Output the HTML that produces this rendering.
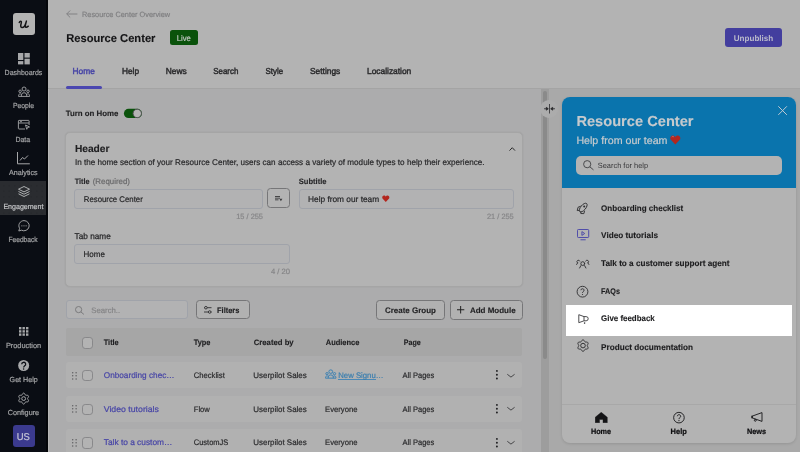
<!DOCTYPE html>
<html><head><meta charset="utf-8">
<style>
*{box-sizing:border-box;margin:0;padding:0}
html,body{width:800px;height:452px;overflow:hidden;background:#acacad;font-family:"Liberation Sans",sans-serif}
.r{position:absolute}
svg.r{overflow:visible;will-change:transform}
#tx{position:absolute;left:0;top:0;will-change:transform}
#tx text{font-family:"Liberation Sans",sans-serif;text-rendering:geometricPrecision}
</style></head><body>
<div class="r" style="left:0px;top:0px;width:48.00px;height:452.00px;background:#0a0d14;"></div>
<div class="r" style="left:48px;top:0px;width:1.00px;height:452.00px;background:#b8b8b8;"></div>
<div class="r" style="left:48px;top:0px;width:752.00px;height:88.00px;background:#b3b3b3;"></div>
<div class="r" style="left:48px;top:88px;width:752.00px;height:1.00px;background:#a4a4a4;"></div>
<div class="r" style="left:541px;top:89px;width:8.00px;height:363.00px;background:#9d9d9d;"></div>
<div class="r" style="left:543px;top:91px;width:4.00px;height:268.00px;background:#8a8a8a;border-radius:2px"></div>
<div class="r" style="left:549px;top:89px;width:251.00px;height:363.00px;background:#a9a9a9;"></div>
<div class="r" style="left:12.5px;top:13px;width:22.50px;height:22.20px;background:#b3b3b3;border-radius:3px"></div>
<div class="r" style="left:0px;top:181px;width:46.00px;height:33.50px;background:#2a2c30;background-image:radial-gradient(circle,#1c1e22 0.45px,transparent 0.7px);background-size:5.5px 5.5px;background-position:1px 2px"></div>
<div class="r" style="left:46px;top:0px;width:2.00px;height:452.00px;background:#04060a;"></div>
<svg class="r" style="left:17.5px;top:52.7px" width="12" height="11.5" viewBox="0 0 12 11.5"><rect x="0" y="0" width="5.3" height="7" fill="#a6a7a9"/><rect x="6.5" y="0" width="5.3" height="4.6" fill="#a6a7a9"/><rect x="0" y="8.1" width="5.3" height="3.3" fill="#a6a7a9"/><rect x="6.5" y="5.7" width="5.3" height="5.7" fill="#a6a7a9"/></svg>
<svg class="r" style="left:17.5px;top:86px" width="12" height="11" viewBox="0 0 12 11"><g fill="none" stroke="#a6a7a9" stroke-width="0.9"><circle cx="6.06" cy="3" r="2"/><circle cx="2.1" cy="5.3" r="1.25"/><circle cx="10" cy="5.3" r="1.25"/><path d="M0.5 10.4 H11.6"/><path d="M3.4 10.4 V9.1 a2.66 2.4 0 0 1 5.32 0 V10.4"/><path d="M0.6 10.4 V9.4 a1.5 1.5 0 0 1 2.7 -0.9"/><path d="M11.5 10.4 V9.4 a1.5 1.5 0 0 0 -2.7 -0.9"/></g></svg>
<svg class="r" style="left:17.5px;top:120.4px" width="12" height="9.5" viewBox="0 0 12 9.5"><g fill="none" stroke="#a6a7a9" stroke-width="0.9"><path d="M7 9 H1 a0.6 0.6 0 0 1 -0.6 -0.6 V1 a0.6 0.6 0 0 1 0.6 -0.6 H10.5 a0.6 0.6 0 0 1 0.6 0.6 V5"/><path d="M0.5 3 H11"/><path d="M2 1.7 H4"/><path d="M7.5 5 L11.5 7 L9.5 7.5 L8.8 9.3 Z"/></g></svg>
<svg class="r" style="left:17px;top:152.2px" width="13" height="12.5" viewBox="0 0 13 12.5"><g fill="none" stroke="#a6a7a9" stroke-width="1"><path d="M0.5 0 V11.8 H12.8"/><path d="M3 8.5 L5.5 5.5 L7.5 7 L11 3.5"/></g></svg>
<svg class="r" style="left:17.6px;top:186.3px" width="12" height="11" viewBox="0 0 12 11"><g fill="none" stroke="#bdbec0" stroke-width="0.9" stroke-linejoin="round"><path d="M6 0.5 L11.5 3.2 L6 5.9 L0.5 3.2 Z"/><path d="M0.5 5.5 L6 8.2 L11.5 5.5"/><path d="M0.5 7.8 L6 10.5 L11.5 7.8"/></g></svg>
<svg class="r" style="left:17.5px;top:219.5px" width="12" height="11.7" viewBox="0 0 12 11.7"><g fill="none" stroke="#a6a7a9" stroke-width="0.95"><path d="M6 0.6 a5.3 5.1 0 1 1 -2.6 9.6 L0.8 11 L1.6 8.3 A5.3 5.1 0 0 1 6 0.6 Z"/></g><g fill="#a6a7a9"><circle cx="3.9" cy="5.8" r="0.6"/><circle cx="6" cy="5.8" r="0.6"/><circle cx="8.1" cy="5.8" r="0.6"/></g></svg>
<svg class="r" style="left:18.9px;top:326.7px" width="9.5" height="9" viewBox="0 0 9.5 9"><rect x="0.0" y="0.0" width="2.4" height="2.4" fill="#a6a7a9"/><rect x="0.0" y="3.2" width="2.4" height="2.4" fill="#a6a7a9"/><rect x="0.0" y="6.4" width="2.4" height="2.4" fill="#a6a7a9"/><rect x="3.5" y="0.0" width="2.4" height="2.4" fill="#a6a7a9"/><rect x="3.5" y="3.2" width="2.4" height="2.4" fill="#a6a7a9"/><rect x="3.5" y="6.4" width="2.4" height="2.4" fill="#a6a7a9"/><rect x="7.0" y="0.0" width="2.4" height="2.4" fill="#a6a7a9"/><rect x="7.0" y="3.2" width="2.4" height="2.4" fill="#a6a7a9"/><rect x="7.0" y="6.4" width="2.4" height="2.4" fill="#a6a7a9"/></svg>
<svg class="r" style="left:17.8px;top:359.5px" width="11.3" height="11" viewBox="0 0 11.3 11"><circle cx="5.65" cy="5.5" r="5.5" fill="#a8a9ab"/><path d="M3.7 4.2 A2 1.9 0 1 1 6.5 5.9 C5.9 6.3 5.65 6.6 5.65 7.4" fill="none" stroke="#0a0d14" stroke-width="1.25"/><circle cx="5.65" cy="8.9" r="0.75" fill="#0a0d14"/></svg>
<svg class="r" style="left:17.8px;top:392.5px" width="11.3" height="11.2" viewBox="0 0 11.3 11.2"><g fill="none" stroke="#a6a7a9" stroke-width="1" stroke-linejoin="round"><path d="M5.65 0.10 L6.12 0.23 L6.54 0.58 L6.87 1.06 L7.12 1.56 L7.34 1.97 L7.60 2.22 L7.95 2.32 L8.41 2.31 L8.97 2.28 L9.56 2.32 L10.07 2.51 L10.41 2.85 L10.54 3.32 L10.44 3.86 L10.19 4.38 L9.88 4.85 L9.64 5.25 L9.55 5.60 L9.64 5.95 L9.88 6.35 L10.19 6.82 L10.44 7.34 L10.54 7.88 L10.41 8.35 L10.07 8.69 L9.56 8.88 L8.97 8.92 L8.41 8.89 L7.95 8.88 L7.60 8.98 L7.34 9.23 L7.12 9.64 L6.87 10.14 L6.54 10.62 L6.12 10.97 L5.65 11.10 L5.18 10.97 L4.76 10.62 L4.43 10.14 L4.18 9.64 L3.96 9.23 L3.70 8.98 L3.35 8.88 L2.89 8.89 L2.33 8.92 L1.74 8.88 L1.23 8.69 L0.89 8.35 L0.76 7.88 L0.86 7.34 L1.11 6.82 L1.42 6.35 L1.66 5.95 L1.75 5.60 L1.66 5.25 L1.42 4.85 L1.11 4.38 L0.86 3.86 L0.76 3.32 L0.89 2.85 L1.23 2.51 L1.74 2.32 L2.33 2.28 L2.89 2.31 L3.35 2.32 L3.70 2.22 L3.96 1.97 L4.18 1.56 L4.43 1.06 L4.76 0.58 L5.18 0.23 L5.65 0.10 Z"/><circle cx="5.65" cy="5.6" r="1.9"/></g></svg>
<div class="r" style="left:12.7px;top:425.4px;width:22.10px;height:21.60px;background:#3b3a8e;border-radius:3px"></div>
<svg class="r" style="left:17px;top:18px" width="14" height="12" viewBox="0 0 14 12"><path d="M2.3 4.5 C2.8 3.4 3.8 3.0 4.3 3.5 C4.7 3.9 4.2 5.2 3.9 6.5 C3.5 8.2 3.8 9.6 5.2 9.6 C6.6 9.6 8.2 7.5 9.0 4.5 M9.4 3.1 C8.7 5.5 8.2 7.5 8.3 8.6 C8.4 9.6 9.5 9.7 11.3 8.2" fill="none" stroke="#141416" stroke-width="1.5" stroke-linecap="round" stroke-linejoin="round"/></svg>
<svg class="r" style="left:65.6px;top:10px" width="11.4" height="8" viewBox="0 0 11.4 8"><g fill="none" stroke="#808082" stroke-width="0.95"><path d="M11.4 4 H0.7"/><path d="M4.2 0.5 L0.7 4 L4.2 7.5"/></g></svg>
<div class="r" style="left:170px;top:30px;width:28.20px;height:14.60px;background:#0a520b;border-radius:2.5px"></div>
<div class="r" style="left:724.8px;top:28px;width:57.20px;height:19.00px;background:#433e9e;border-radius:3px"></div>
<div class="r" style="left:65.5px;top:86px;width:36.50px;height:2.50px;background:#4b47b0;border-radius:1.5px"></div>
<svg class="r" style="left:123px;top:107.5px" width="20" height="11" viewBox="0 0 20 11"><rect x="0.9" y="0.8" width="18" height="9.3" rx="4.65" fill="#0a520b"/><circle cx="14.25" cy="5.45" r="4.2" fill="#b4b4b4" stroke="#505052" stroke-width="0.95"/></svg>
<div class="r" style="left:64.6px;top:131.8px;width:458.60px;height:155.00px;background:#b3b3b3;border:1px solid #a5a5a5;border-radius:5px;box-shadow:0 0 1.5px rgba(0,0,0,0.10)"></div>
<svg class="r" style="left:508.5px;top:146.5px" width="6.5" height="4" viewBox="0 0 6.5 4"><path d="M0.5 3.6 L3.25 0.7 L6 3.6" fill="none" stroke="#2a2a2a" stroke-width="1"/></svg>
<div class="r" style="left:74.3px;top:189.2px;width:188.50px;height:20.00px;background:#b2b2b3;border:1px solid #a0a3aa;border-radius:3px"></div>
<div class="r" style="left:267.3px;top:188.2px;width:22.50px;height:20.30px;background:transparent;border:1px solid #767678;border-radius:3.5px"></div>
<svg class="r" style="left:274.8px;top:195.5px" width="7.5" height="5.5" viewBox="0 0 7.5 5.5"><g fill="#3a3a3c"><rect x="0" y="0" width="5" height="0.9"/><rect x="0" y="1.7" width="5" height="0.9"/><rect x="0" y="3.4" width="3.5" height="0.9"/><path d="M4.4 2.8 L7.4 2.8 L5.9 5.2 Z"/></g></svg>
<div class="r" style="left:298.7px;top:189.2px;width:215.10px;height:20.00px;background:#b2b2b3;border:1px solid #a0a3aa;border-radius:3px"></div>
<svg class="r" style="left:381.8px;top:195.2px" width="7.6" height="7" viewBox="0 0 7.6 7"><path d="M3.8 6.9 L0.5 3.4 C-0.1 2.5 0.3 0.4 2 0.4 C2.9 0.4 3.4 0.9 3.8 1.5 C4.2 0.9 4.7 0.4 5.6 0.4 C7.3 0.4 7.7 2.5 7.1 3.4 Z" fill="#b3261e"/></svg>
<div class="r" style="left:74.3px;top:243.8px;width:215.50px;height:20.00px;background:#b2b2b3;border:1px solid #a0a3aa;border-radius:3px"></div>
<div class="r" style="left:65.5px;top:300px;width:122.00px;height:19.20px;background:#b2b2b3;border:1px solid #a0a3aa;border-radius:3px"></div>
<svg class="r" style="left:75px;top:305.7px" width="9.5" height="8.5" viewBox="0 0 9.5 8.5"><g fill="none" stroke="#7a7a7c" stroke-width="1"><circle cx="3.6" cy="3.6" r="3.1"/><path d="M5.9 5.9 L8.9 8.4"/></g></svg>
<div class="r" style="left:196.25px;top:299.6px;width:53.25px;height:19.90px;background:#b1b1b1;border:1px solid #767678;border-radius:3.5px"></div>
<svg class="r" style="left:204.2px;top:305.7px" width="8" height="8" viewBox="0 0 8 8"><g fill="none" stroke="#2e2e30" stroke-width="0.9"><path d="M0 1.7 H7.5"/><path d="M0 6 H7.5"/></g><circle cx="1.9" cy="1.7" r="1.3" fill="#b1b1b1" stroke="#2e2e30" stroke-width="0.9"/><circle cx="5.7" cy="6" r="1.3" fill="#b1b1b1" stroke="#2e2e30" stroke-width="0.9"/></svg>
<div class="r" style="left:375.9px;top:299.9px;width:69.10px;height:19.70px;background:#b1b1b1;border:1px solid #767678;border-radius:3.5px"></div>
<div class="r" style="left:449.7px;top:299.9px;width:73.30px;height:19.70px;background:#b1b1b1;border:1px solid #767678;border-radius:3.5px"></div>
<svg class="r" style="left:457.3px;top:305.8px" width="7.3" height="7.5" viewBox="0 0 7.3 7.5"><g stroke="#222" stroke-width="1"><path d="M3.65 0 V7.5"/><path d="M0 3.75 H7.3"/></g></svg>
<div class="r" style="left:65.5px;top:328.2px;width:456.80px;height:27.60px;background:#a6a6a6;border-radius:2px"></div>
<div class="r" style="left:82.1px;top:337.40000000000003px;width:11.40px;height:11.40px;background:#b3b3b3;border:1px solid #88888a;border-radius:3.2px"></div>
<div class="r" style="left:65.5px;top:362.0px;width:456.80px;height:26.30px;background:#b1b1b1;border-radius:3px"></div>
<svg class="r" style="left:72.4px;top:371.5px" width="5" height="7.5" viewBox="0 0 5 7.5"><circle cx="0.7" cy="0.7" r="0.75" fill="#606062"/><circle cx="0.7" cy="3.8" r="0.75" fill="#606062"/><circle cx="0.7" cy="6.9" r="0.75" fill="#606062"/><circle cx="4.1" cy="0.7" r="0.75" fill="#606062"/><circle cx="4.1" cy="3.8" r="0.75" fill="#606062"/><circle cx="4.1" cy="6.9" r="0.75" fill="#606062"/></svg>
<div class="r" style="left:82.1px;top:369.90000000000003px;width:11.40px;height:11.40px;background:#b3b3b3;border:1px solid #88888a;border-radius:3.2px"></div>
<svg class="r" style="left:324.6px;top:368.6px" width="11.4" height="9.6" viewBox="0 0 11.4 9.6"><g transform="scale(0.95 0.88)" fill="none" stroke="#3a80b2" stroke-width="1.05"><circle cx="6.06" cy="3" r="2"/><circle cx="2.1" cy="5.3" r="1.25"/><circle cx="10" cy="5.3" r="1.25"/><path d="M0.5 10.4 H11.6"/><path d="M3.4 10.4 V9.1 a2.66 2.4 0 0 1 5.32 0 V10.4"/><path d="M0.6 10.4 V9.4 a1.5 1.5 0 0 1 2.7 -0.9"/><path d="M11.5 10.4 V9.4 a1.5 1.5 0 0 0 -2.7 -0.9"/></g></svg>
<div class="r" style="left:338.2px;top:379.45px;width:38.10px;height:0.60px;background:#4a88b6;"></div>
<svg class="r" style="left:496.1px;top:370.4px" width="2" height="9.5" viewBox="0 0 2 9.5"><circle cx="0.9" cy="0.9" r="0.95" fill="#1e1e20"/><circle cx="0.9" cy="4.7" r="0.95" fill="#1e1e20"/><circle cx="0.9" cy="8.5" r="0.95" fill="#1e1e20"/></svg>
<svg class="r" style="left:507.1px;top:373.6px" width="8" height="3.6" viewBox="0 0 8 3.6"><path d="M0.3 0.3 L3.95 3.1 L7.6 0.3" fill="none" stroke="#3a3a3c" stroke-width="0.9"/></svg>
<div class="r" style="left:65.5px;top:395.6px;width:456.80px;height:26.40px;background:#b1b1b1;border-radius:3px"></div>
<svg class="r" style="left:72.4px;top:405.15000000000003px" width="5" height="7.5" viewBox="0 0 5 7.5"><circle cx="0.7" cy="0.7" r="0.75" fill="#606062"/><circle cx="0.7" cy="3.8" r="0.75" fill="#606062"/><circle cx="0.7" cy="6.9" r="0.75" fill="#606062"/><circle cx="4.1" cy="0.7" r="0.75" fill="#606062"/><circle cx="4.1" cy="3.8" r="0.75" fill="#606062"/><circle cx="4.1" cy="6.9" r="0.75" fill="#606062"/></svg>
<div class="r" style="left:82.1px;top:403.55000000000007px;width:11.40px;height:11.40px;background:#b3b3b3;border:1px solid #88888a;border-radius:3.2px"></div>
<svg class="r" style="left:496.1px;top:404.05px" width="2" height="9.5" viewBox="0 0 2 9.5"><circle cx="0.9" cy="0.9" r="0.95" fill="#1e1e20"/><circle cx="0.9" cy="4.7" r="0.95" fill="#1e1e20"/><circle cx="0.9" cy="8.5" r="0.95" fill="#1e1e20"/></svg>
<svg class="r" style="left:507.1px;top:407.25000000000006px" width="8" height="3.6" viewBox="0 0 8 3.6"><path d="M0.3 0.3 L3.95 3.1 L7.6 0.3" fill="none" stroke="#3a3a3c" stroke-width="0.9"/></svg>
<div class="r" style="left:65.5px;top:429.2px;width:456.80px;height:26.40px;background:#b1b1b1;border-radius:3px"></div>
<svg class="r" style="left:72.4px;top:438.75px" width="5" height="7.5" viewBox="0 0 5 7.5"><circle cx="0.7" cy="0.7" r="0.75" fill="#606062"/><circle cx="0.7" cy="3.8" r="0.75" fill="#606062"/><circle cx="0.7" cy="6.9" r="0.75" fill="#606062"/><circle cx="4.1" cy="0.7" r="0.75" fill="#606062"/><circle cx="4.1" cy="3.8" r="0.75" fill="#606062"/><circle cx="4.1" cy="6.9" r="0.75" fill="#606062"/></svg>
<div class="r" style="left:82.1px;top:437.15000000000003px;width:11.40px;height:11.40px;background:#b3b3b3;border:1px solid #88888a;border-radius:3.2px"></div>
<svg class="r" style="left:496.1px;top:437.65px" width="2" height="9.5" viewBox="0 0 2 9.5"><circle cx="0.9" cy="0.9" r="0.95" fill="#1e1e20"/><circle cx="0.9" cy="4.7" r="0.95" fill="#1e1e20"/><circle cx="0.9" cy="8.5" r="0.95" fill="#1e1e20"/></svg>
<svg class="r" style="left:507.1px;top:440.85px" width="8" height="3.6" viewBox="0 0 8 3.6"><path d="M0.3 0.3 L3.95 3.1 L7.6 0.3" fill="none" stroke="#3a3a3c" stroke-width="0.9"/></svg>
<div class="r" style="left:540px;top:99.8px;width:18px;height:18px;border-radius:50%;background:#acacac"></div>
<svg class="r" style="left:543.5px;top:104px" width="11" height="9.5" viewBox="0 0 11 9.5"><g fill="#2a2a2c" stroke="#2a2a2c" stroke-width="0.8"><path d="M5.5 0 V9.5" fill="none"/><path d="M0 4.75 H3.8" fill="none"/><path d="M7.2 4.75 H11" fill="none"/><path d="M4.3 4.75 L2.3 3.3 V6.2 Z"/><path d="M6.7 4.75 L8.7 3.3 V6.2 Z"/></g></svg>
<div class="r" style="left:562px;top:97px;width:234.00px;height:345.60px;background:#b3b3b3;border-radius:8px;box-shadow:0 1px 3px rgba(0,0,0,0.12)"></div>
<div class="r" style="left:562px;top:97px;width:234.00px;height:90.60px;background:#0a74ad;border-radius:8px 8px 0 0"></div>
<svg class="r" style="left:670.2px;top:135.1px" width="10.6" height="9.7" viewBox="0 0 10.6 9.7"><path d="M5.3 9.6 L0.6 4.6 C-0.2 3.4 0.4 0.5 2.8 0.5 C4 0.5 4.8 1.2 5.3 2 C5.8 1.2 6.6 0.5 7.8 0.5 C10.2 0.5 10.8 3.4 10 4.6 Z" fill="#b3261e"/><path d="M1.8 2 C2.4 1.4 3.4 1.4 3.9 2" stroke="#c88" stroke-width="0.7" fill="none"/></svg>
<div class="r" style="left:575.8px;top:156px;width:206.30px;height:18.60px;background:#b3b3b3;border-radius:5px"></div>
<svg class="r" style="left:583.1px;top:160.2px" width="11" height="10.2" viewBox="0 0 11 10.2"><g fill="none" stroke="#4a4a4c" stroke-width="1"><circle cx="4.2" cy="4.2" r="3.6"/><path d="M6.8 6.8 L10.5 9.9"/></g></svg>
<svg class="r" style="left:778.3px;top:106px" width="9.2" height="9.2" viewBox="0 0 9.2 9.2"><g stroke="#c0cad2" stroke-width="1"><path d="M0.3 0.3 L8.9 8.9"/><path d="M8.9 0.3 L0.3 8.9"/></g></svg>
<div class="r" style="left:565.6px;top:304.9px;width:226.20px;height:31.40px;background:#ffffff;"></div>
<svg class="r" style="left:576.3px;top:200.6px" width="12.5" height="13.5" viewBox="0 0 12.5 13.5"><g fill="none" stroke="#2e2e30" stroke-width="0.9" stroke-linejoin="round"><ellipse cx="7.2" cy="6.6" rx="2.5" ry="5.3" transform="rotate(40 7.2 6.6)"/><path d="M4.6 5.2 L2 6.3 L1.2 9.6 L3.6 9.3"/><path d="M8.6 9.8 L7.9 12.6 L4.8 12.5 L4.7 10.4"/></g><circle cx="8.2" cy="5.4" r="1" fill="#2e2e30"/></svg>
<svg class="r" style="left:576.7px;top:229.1px" width="12.2" height="11.3" viewBox="0 0 12.2 11.3"><g fill="none" stroke="#4a47a8" stroke-width="0.95"><rect x="0.5" y="0.5" width="11.2" height="8" rx="0.8"/><path d="M3.5 10.8 H8.7"/><path d="M4.9 2.6 L7.7 4.5 L4.9 6.4 Z"/></g></svg>
<svg class="r" style="left:576px;top:257.6px" width="13.5" height="10.5" viewBox="0 0 13.5 10.5"><g fill="none" stroke="#2e2e30" stroke-width="0.9" stroke-linecap="round"><circle cx="6.75" cy="5.6" r="1.9"/><path d="M4.9 7.6 L3.6 10"/><path d="M8.6 7.6 L9.9 10"/><path d="M1.4 4.8 a1.5 1.5 0 1 1 2.4 -1.7"/><path d="M0.6 6.5 L1.6 5"/><path d="M12.1 4.8 a1.5 1.5 0 1 0 -2.4 -1.7"/><path d="M12.9 6.5 L11.9 5"/></g></svg>
<svg class="r" style="left:576.3px;top:285.5px" width="13" height="11.4" viewBox="0 0 13 11.4"><g fill="none" stroke="#2e2e30" stroke-width="0.9"><circle cx="6.5" cy="5.7" r="5.4"/><path d="M4.9 4.2 a1.6 1.5 0 1 1 2.3 1.4 c-0.5 0.3 -0.7 0.6 -0.7 1.3"/></g><circle cx="6.5" cy="8.5" r="0.6" fill="#2e2e30"/></svg>
<svg class="r" style="left:577.5px;top:313.6px" width="11" height="10" viewBox="0 0 11 10"><g fill="none" stroke="#3a3a3c" stroke-width="0.9" stroke-linejoin="round"><path d="M0.8 0.7 L6 2.6 V6.8 L0.8 8.7 Z"/><path d="M6 2.6 H8.1 A2.1 2.1 0 0 1 8.1 6.8 H6"/></g><circle cx="6.6" cy="9.1" r="0.8" fill="#3a3a3c"/></svg>
<svg class="r" style="left:576.8px;top:340.4px" width="12" height="11.2" viewBox="0 0 12 11.2"><g fill="none" stroke="#2e2e30" stroke-width="0.95" stroke-linejoin="round"><path d="M6.00 -0.15 L6.49 -0.03 L6.93 0.31 L7.29 0.77 L7.58 1.25 L7.84 1.66 L8.12 1.92 L8.50 2.04 L8.97 2.06 L9.54 2.06 L10.12 2.15 L10.63 2.36 L10.98 2.72 L11.12 3.21 L11.05 3.76 L10.83 4.31 L10.55 4.80 L10.33 5.22 L10.25 5.60 L10.33 5.98 L10.55 6.40 L10.83 6.89 L11.05 7.44 L11.12 7.99 L10.98 8.47 L10.63 8.84 L10.12 9.05 L9.54 9.14 L8.97 9.14 L8.50 9.16 L8.13 9.28 L7.84 9.54 L7.58 9.95 L7.29 10.43 L6.93 10.89 L6.49 11.23 L6.00 11.35 L5.51 11.23 L5.07 10.89 L4.71 10.43 L4.42 9.95 L4.16 9.54 L3.87 9.28 L3.50 9.16 L3.03 9.14 L2.46 9.14 L1.88 9.05 L1.37 8.84 L1.02 8.48 L0.88 7.99 L0.95 7.44 L1.17 6.89 L1.45 6.40 L1.67 5.98 L1.75 5.60 L1.67 5.22 L1.45 4.80 L1.17 4.31 L0.95 3.76 L0.88 3.21 L1.02 2.73 L1.37 2.36 L1.88 2.15 L2.46 2.06 L3.03 2.06 L3.50 2.04 L3.88 1.92 L4.16 1.66 L4.42 1.25 L4.71 0.77 L5.07 0.31 L5.51 -0.03 L6.00 -0.15 Z"/><circle cx="6" cy="5.6" r="2.3"/></g></svg>
<div class="r" style="left:562px;top:403.6px;width:234.00px;height:0.80px;background:#a8a8a8;"></div>
<svg class="r" style="left:594.7px;top:412.3px" width="12.5" height="11" viewBox="0 0 12.5 11"><path d="M6.25 0.3 L12.3 5.3 V10.8 H8 V7.5 H4.5 V10.8 H0.2 V5.3 Z" fill="#141416" stroke="#141416" stroke-width="0.4" stroke-linejoin="round"/></svg>
<svg class="r" style="left:673px;top:412px" width="11.9" height="11.3" viewBox="0 0 11.9 11.3"><g fill="none" stroke="#1e1e20" stroke-width="0.95"><circle cx="5.95" cy="5.65" r="5.3"/><path d="M4.3 4.2 a1.7 1.6 0 1 1 2.5 1.5 c-0.6 0.3 -0.8 0.6 -0.8 1.4"/></g><circle cx="5.95" cy="8.6" r="0.65" fill="#1e1e20"/></svg>
<svg class="r" style="left:750.5px;top:412.3px" width="12" height="10.5" viewBox="0 0 12 10.5"><g fill="none" stroke="#1e1e20" stroke-width="0.95" stroke-linejoin="round"><path d="M11 0.6 V9.4 L1.3 5.9 V4.1 Z"/><circle cx="4.3" cy="8.3" r="0.95"/></g><rect x="0.3" y="3.7" width="1.6" height="2.6" fill="#1e1e20"/></svg>
<svg id="tx" width="800" height="452" viewBox="0 0 800 452">
<text x="4.60" y="75" font-size="7.4" font-weight="normal" fill="#a3a4a6" textLength="37.71" lengthAdjust="spacingAndGlyphs" stroke="#a3a4a6" stroke-width="0.2">Dashboards</text>
<text x="12.90" y="108" font-size="7.4" font-weight="normal" fill="#a3a4a6" textLength="21.20" lengthAdjust="spacingAndGlyphs" stroke="#a3a4a6" stroke-width="0.2">People</text>
<text x="15.50" y="142" font-size="7.4" font-weight="normal" fill="#a3a4a6" textLength="14.66" lengthAdjust="spacingAndGlyphs" stroke="#a3a4a6" stroke-width="0.2">Data</text>
<text x="9.00" y="175" font-size="7.4" font-weight="normal" fill="#a3a4a6" textLength="28.61" lengthAdjust="spacingAndGlyphs" stroke="#a3a4a6" stroke-width="0.2">Analytics</text>
<text x="3.40" y="209" font-size="7.4" font-weight="normal" fill="#c2c3c5" textLength="40.05" lengthAdjust="spacingAndGlyphs" stroke="#c2c3c5" stroke-width="0.2">Engagement</text>
<text x="8.50" y="242" font-size="7.4" font-weight="normal" fill="#a3a4a6" textLength="29.13" lengthAdjust="spacingAndGlyphs" stroke="#a3a4a6" stroke-width="0.2">Feedback</text>
<text x="5.90" y="348" font-size="7.4" font-weight="normal" fill="#a3a4a6" textLength="35.21" lengthAdjust="spacingAndGlyphs" stroke="#a3a4a6" stroke-width="0.2">Production</text>
<text x="9.60" y="382" font-size="7.4" font-weight="normal" fill="#a3a4a6" textLength="28.11" lengthAdjust="spacingAndGlyphs" stroke="#a3a4a6" stroke-width="0.2">Get Help</text>
<text x="7.70" y="415" font-size="7.4" font-weight="normal" fill="#a3a4a6" textLength="31.41" lengthAdjust="spacingAndGlyphs" stroke="#a3a4a6" stroke-width="0.2">Configure</text>
<text x="16.70" y="440" font-size="9.9" font-weight="normal" fill="#c6c6d6" textLength="13.11" lengthAdjust="spacingAndGlyphs" stroke="#c6c6d6" stroke-width="0.2">US</text>
<text x="82.00" y="17" font-size="7.6" font-weight="normal" fill="#7f7f81" textLength="88.10" lengthAdjust="spacingAndGlyphs" stroke="#7f7f81" stroke-width="0.2">Resource Center Overview</text>
<text x="66.20" y="42" font-size="11.4" font-weight="bold" fill="#141416" textLength="89.24" lengthAdjust="spacingAndGlyphs" stroke="#141416" stroke-width="0.12">Resource Center</text>
<text x="176.70" y="41" font-size="8.2" font-weight="normal" fill="#c0c6c0" textLength="14.18" lengthAdjust="spacingAndGlyphs" stroke="#c0c6c0" stroke-width="0.2">Live</text>
<text x="733.80" y="41" font-size="8.2" font-weight="bold" fill="#bcbccb" textLength="39.40" lengthAdjust="spacingAndGlyphs" stroke-width="0">Unpublish</text>
<text x="72.50" y="74" font-size="8.6" font-weight="normal" fill="#4745a6" textLength="22.29" lengthAdjust="spacingAndGlyphs" stroke="#4745a6" stroke-width="0.45">Home</text>
<text x="122.00" y="74" font-size="8.6" font-weight="normal" fill="#2c2c2e" textLength="17.04" lengthAdjust="spacingAndGlyphs" stroke="#2c2c2e" stroke-width="0.45">Help</text>
<text x="165.75" y="74" font-size="8.6" font-weight="normal" fill="#2c2c2e" textLength="21.04" lengthAdjust="spacingAndGlyphs" stroke="#2c2c2e" stroke-width="0.45">News</text>
<text x="213.25" y="74" font-size="8.6" font-weight="normal" fill="#2c2c2e" textLength="25.05" lengthAdjust="spacingAndGlyphs" stroke="#2c2c2e" stroke-width="0.45">Search</text>
<text x="265.50" y="74" font-size="8.6" font-weight="normal" fill="#2c2c2e" textLength="17.55" lengthAdjust="spacingAndGlyphs" stroke="#2c2c2e" stroke-width="0.45">Style</text>
<text x="310.00" y="74" font-size="8.6" font-weight="normal" fill="#2c2c2e" textLength="30.29" lengthAdjust="spacingAndGlyphs" stroke="#2c2c2e" stroke-width="0.45">Settings</text>
<text x="367.00" y="74" font-size="8.6" font-weight="normal" fill="#2c2c2e" textLength="44.28" lengthAdjust="spacingAndGlyphs" stroke="#2c2c2e" stroke-width="0.45">Localization</text>
<text x="65.70" y="116" font-size="8.0" font-weight="bold" fill="#222224" textLength="52.76" lengthAdjust="spacingAndGlyphs" stroke="#222224" stroke-width="0.12">Turn on Home</text>
<text x="74.90" y="152" font-size="10.2" font-weight="bold" fill="#202022" textLength="34.56" lengthAdjust="spacingAndGlyphs" stroke="#202022" stroke-width="0.12">Header</text>
<text x="74.90" y="165" font-size="8.3" font-weight="normal" fill="#29292b" textLength="409.60" lengthAdjust="spacingAndGlyphs" stroke="#29292b" stroke-width="0.2">In the home section of your Resource Center, users can access a variety of module types to help their experience.</text>
<text x="74.75" y="184" font-size="7.8" font-weight="bold" fill="#29292b" textLength="14.88" lengthAdjust="spacingAndGlyphs" stroke="#29292b" stroke-width="0.12">Title</text>
<text x="92.75" y="184" font-size="8.0" font-weight="normal" fill="#68686a" textLength="37.17" lengthAdjust="spacingAndGlyphs" stroke="#68686a" stroke-width="0.2">(Required)</text>
<text x="83.75" y="202" font-size="8.2" font-weight="normal" fill="#262628" textLength="58.99" lengthAdjust="spacingAndGlyphs" stroke="#262628" stroke-width="0.2">Resource Center</text>
<text x="236.25" y="219" font-size="7.6" font-weight="normal" fill="#858587" textLength="26.72" lengthAdjust="spacingAndGlyphs" stroke="#858587" stroke-width="0.2">15 / 255</text>
<text x="298.70" y="184" font-size="7.8" font-weight="bold" fill="#29292b" textLength="27.85" lengthAdjust="spacingAndGlyphs" stroke="#29292b" stroke-width="0.12">Subtitle</text>
<text x="308.00" y="202" font-size="8.3" font-weight="normal" fill="#262628" textLength="71.16" lengthAdjust="spacingAndGlyphs" stroke="#262628" stroke-width="0.2">Help from our team</text>
<text x="487.00" y="219" font-size="7.6" font-weight="normal" fill="#858587" textLength="26.72" lengthAdjust="spacingAndGlyphs" stroke="#858587" stroke-width="0.2">21 / 255</text>
<text x="74.60" y="239" font-size="8.3" font-weight="normal" fill="#29292b" textLength="36.12" lengthAdjust="spacingAndGlyphs" stroke="#29292b" stroke-width="0.25">Tab name</text>
<text x="83.60" y="257" font-size="8.3" font-weight="normal" fill="#262628" textLength="21.33" lengthAdjust="spacingAndGlyphs" stroke="#262628" stroke-width="0.2">Home</text>
<text x="270.90" y="274" font-size="7.6" font-weight="normal" fill="#858587" textLength="19.12" lengthAdjust="spacingAndGlyphs" stroke="#858587" stroke-width="0.2">4 / 20</text>
<text x="91.25" y="313" font-size="7.9" font-weight="normal" fill="#858587" textLength="28.94" lengthAdjust="spacingAndGlyphs" stroke="#858587" stroke-width="0.2">Search..</text>
<text x="217.00" y="313" font-size="7.9" font-weight="bold" fill="#222224" textLength="22.42" lengthAdjust="spacingAndGlyphs" stroke="#222224" stroke-width="0.12">Filters</text>
<text x="384.90" y="313" font-size="8.0" font-weight="bold" fill="#222224" textLength="50.99" lengthAdjust="spacingAndGlyphs" stroke="#222224" stroke-width="0.12">Create Group</text>
<text x="469.90" y="313" font-size="8.0" font-weight="bold" fill="#222224" textLength="45.75" lengthAdjust="spacingAndGlyphs" stroke="#222224" stroke-width="0.12">Add Module</text>
<text x="103.75" y="345" font-size="7.9" font-weight="bold" fill="#1e1e20" textLength="14.93" lengthAdjust="spacingAndGlyphs" stroke="#1e1e20" stroke-width="0.12">Title</text>
<text x="193.75" y="345" font-size="7.9" font-weight="bold" fill="#1e1e20" textLength="16.68" lengthAdjust="spacingAndGlyphs" stroke="#1e1e20" stroke-width="0.12">Type</text>
<text x="253.75" y="345" font-size="7.9" font-weight="bold" fill="#1e1e20" textLength="39.90" lengthAdjust="spacingAndGlyphs" stroke="#1e1e20" stroke-width="0.12">Created by</text>
<text x="325.75" y="345" font-size="7.9" font-weight="bold" fill="#1e1e20" textLength="33.67" lengthAdjust="spacingAndGlyphs" stroke="#1e1e20" stroke-width="0.12">Audience</text>
<text x="403.75" y="345" font-size="7.9" font-weight="bold" fill="#1e1e20" textLength="16.95" lengthAdjust="spacingAndGlyphs" stroke="#1e1e20" stroke-width="0.12">Page</text>
<text x="103.75" y="378" font-size="8.3" font-weight="normal" fill="#4745a6" textLength="70.79" lengthAdjust="spacingAndGlyphs" stroke="#4745a6" stroke-width="0.2">Onboarding chec…</text>
<text x="193.75" y="378" font-size="8.0" font-weight="normal" fill="#2a2a2c" textLength="31.01" lengthAdjust="spacingAndGlyphs" stroke="#2a2a2c" stroke-width="0.2">Checklist</text>
<text x="253.25" y="378" font-size="8.0" font-weight="normal" fill="#2a2a2c" textLength="53.50" lengthAdjust="spacingAndGlyphs" stroke="#2a2a2c" stroke-width="0.2">Userpilot Sales</text>
<text x="338.25" y="378" font-size="8.0" font-weight="normal" fill="#3b7eae" textLength="45.22" lengthAdjust="spacingAndGlyphs" stroke="#3b7eae" stroke-width="0.2">New Signu…</text>
<text x="402.50" y="378" font-size="8.0" font-weight="normal" fill="#2a2a2c" textLength="31.75" lengthAdjust="spacingAndGlyphs" stroke="#2a2a2c" stroke-width="0.2">All Pages</text>
<text x="103.75" y="412" font-size="8.3" font-weight="normal" fill="#4745a6" textLength="55.16" lengthAdjust="spacingAndGlyphs" stroke="#4745a6" stroke-width="0.2">Video tutorials</text>
<text x="193.75" y="412" font-size="8.0" font-weight="normal" fill="#2a2a2c" textLength="16.04" lengthAdjust="spacingAndGlyphs" stroke="#2a2a2c" stroke-width="0.2">Flow</text>
<text x="253.25" y="412" font-size="8.0" font-weight="normal" fill="#2a2a2c" textLength="53.50" lengthAdjust="spacingAndGlyphs" stroke="#2a2a2c" stroke-width="0.2">Userpilot Sales</text>
<text x="325.00" y="412" font-size="8.0" font-weight="normal" fill="#2a2a2c" textLength="32.47" lengthAdjust="spacingAndGlyphs" stroke="#2a2a2c" stroke-width="0.2">Everyone</text>
<text x="402.50" y="412" font-size="8.0" font-weight="normal" fill="#2a2a2c" textLength="31.75" lengthAdjust="spacingAndGlyphs" stroke="#2a2a2c" stroke-width="0.2">All Pages</text>
<text x="103.75" y="445" font-size="8.3" font-weight="normal" fill="#4745a6" textLength="68.55" lengthAdjust="spacingAndGlyphs" stroke="#4745a6" stroke-width="0.2">Talk to a custom…</text>
<text x="193.75" y="445" font-size="8.0" font-weight="normal" fill="#2a2a2c" textLength="34.56" lengthAdjust="spacingAndGlyphs" stroke="#2a2a2c" stroke-width="0.2">CustomJS</text>
<text x="253.25" y="445" font-size="8.0" font-weight="normal" fill="#2a2a2c" textLength="53.50" lengthAdjust="spacingAndGlyphs" stroke="#2a2a2c" stroke-width="0.2">Userpilot Sales</text>
<text x="325.00" y="445" font-size="8.0" font-weight="normal" fill="#2a2a2c" textLength="32.47" lengthAdjust="spacingAndGlyphs" stroke="#2a2a2c" stroke-width="0.2">Everyone</text>
<text x="402.50" y="445" font-size="8.0" font-weight="normal" fill="#2a2a2c" textLength="31.75" lengthAdjust="spacingAndGlyphs" stroke="#2a2a2c" stroke-width="0.2">All Pages</text>
<text x="576.40" y="126" font-size="14.5" font-weight="bold" fill="#c6cacd" textLength="117.14" lengthAdjust="spacingAndGlyphs" stroke="#c6cacd" stroke-width="0.12">Resource Center</text>
<text x="576.40" y="144" font-size="10.7" font-weight="normal" fill="#c6cacd" textLength="91.10" lengthAdjust="spacingAndGlyphs" stroke="#c6cacd" stroke-width="0.2">Help from our team</text>
<text x="597.80" y="168" font-size="7.6" font-weight="normal" fill="#38383a" textLength="50.32" lengthAdjust="spacingAndGlyphs" stroke-width="0">Search for help</text>
<text x="601.10" y="211" font-size="8.3" font-weight="bold" fill="#1c1c1e" textLength="82.07" lengthAdjust="spacingAndGlyphs" stroke="#1c1c1e" stroke-width="0.12">Onboarding checklist</text>
<text x="601.10" y="238" font-size="8.3" font-weight="bold" fill="#1c1c1e" textLength="56.92" lengthAdjust="spacingAndGlyphs" stroke="#1c1c1e" stroke-width="0.12">Video tutorials</text>
<text x="601.10" y="266" font-size="8.3" font-weight="bold" fill="#1c1c1e" textLength="128.47" lengthAdjust="spacingAndGlyphs" stroke="#1c1c1e" stroke-width="0.12">Talk to a customer support agent</text>
<text x="601.10" y="294" font-size="8.3" font-weight="bold" fill="#1c1c1e" textLength="18.86" lengthAdjust="spacingAndGlyphs" stroke="#1c1c1e" stroke-width="0.12">FAQs</text>
<text x="601.10" y="321" font-size="8.3" font-weight="bold" fill="#1c1c1e" textLength="53.63" lengthAdjust="spacingAndGlyphs" stroke="#1c1c1e" stroke-width="0.12">Give feedback</text>
<text x="601.10" y="350" font-size="8.3" font-weight="bold" fill="#1c1c1e" textLength="91.87" lengthAdjust="spacingAndGlyphs" stroke="#1c1c1e" stroke-width="0.12">Product documentation</text>
<text x="590.90" y="434" font-size="7.8" font-weight="bold" fill="#0e0e10" textLength="20.18" lengthAdjust="spacingAndGlyphs" stroke="#0e0e10" stroke-width="0.22">Home</text>
<text x="670.60" y="434" font-size="7.8" font-weight="bold" fill="#0e0e10" textLength="16.17" lengthAdjust="spacingAndGlyphs" stroke="#0e0e10" stroke-width="0.22">Help</text>
<text x="747.00" y="434" font-size="7.8" font-weight="bold" fill="#0e0e10" textLength="19.08" lengthAdjust="spacingAndGlyphs" stroke="#0e0e10" stroke-width="0.22">News</text>
</svg>
</body></html>
